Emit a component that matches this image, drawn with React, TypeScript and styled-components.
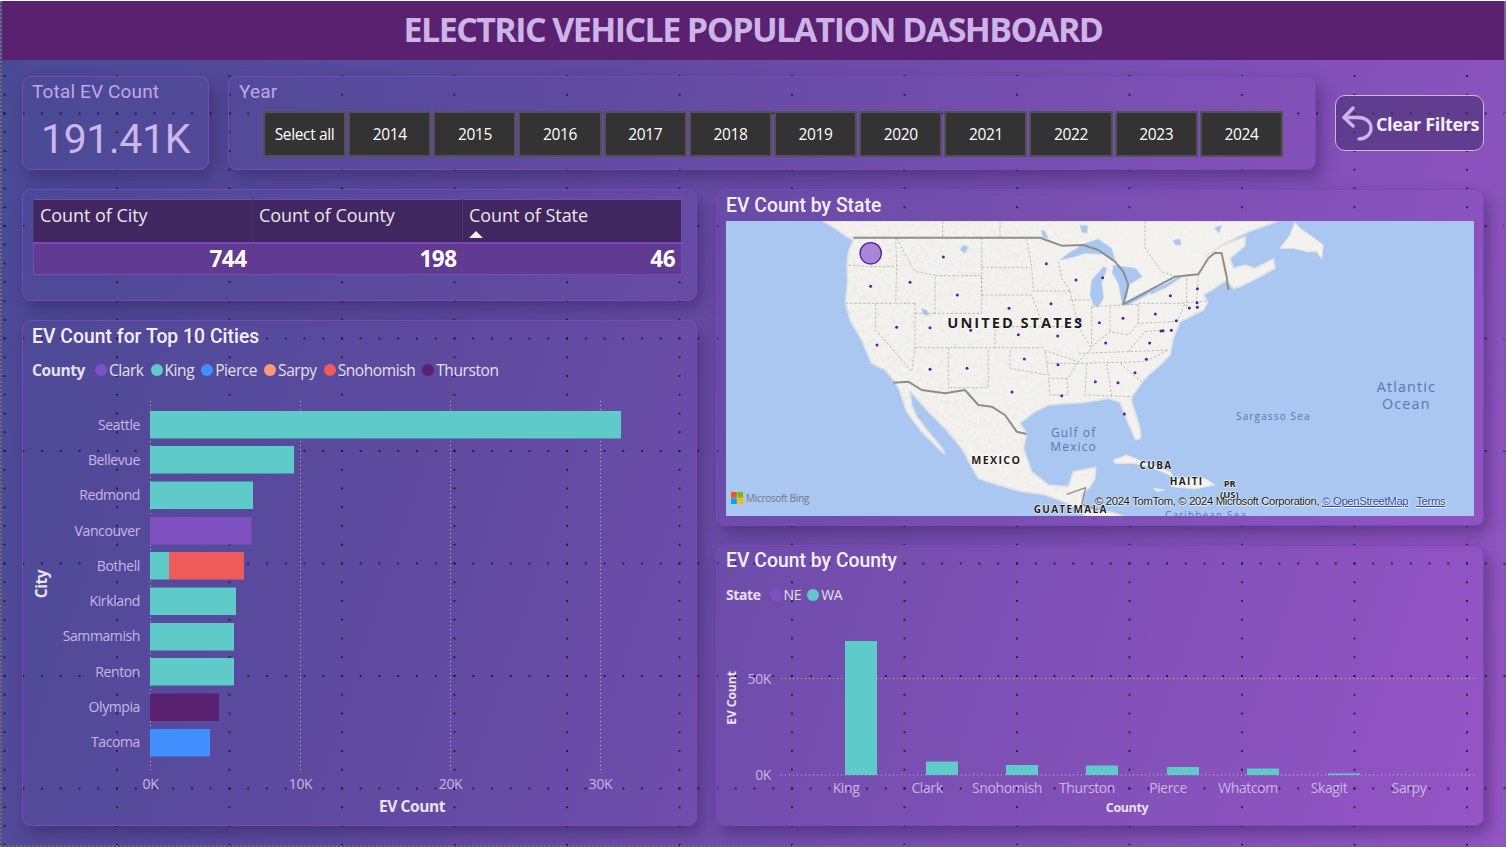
import React from "react";
import styled, { createGlobalStyle } from "styled-components";

const Global = createGlobalStyle`
  html, body { margin: 0; padding: 0; background: #fff; }
  #root { width: 1506px; height: 847px; overflow: hidden; }
`;

const sans = `Roboto, "Liberation Sans", sans-serif`;
const ui = `"Open Sans", "Liberation Sans", sans-serif`;

const Page = styled.div`
  box-sizing: border-box;
  width: 1506px;
  height: 846px;
  margin-top: 1px;
  display: flex;
  flex-direction: column;
  border: 2px dotted #6f6a78;
  border-top: 0;
  background-color: #6b50ac;
  background-image:
    radial-gradient(circle at 1px 1px, rgba(28, 18, 48, 0.8) 0.9px, transparent 1.2px),
    radial-gradient(circle at 1px 1px, rgba(28, 18, 48, 0.8) 0.9px, transparent 1.2px),
    linear-gradient(108deg, #484a94 0%, #5d4a9f 32%, #7f50b6 72%, #9655c6 100%);
  background-size: 112.5px 18.75px, 18.75px 112.5px, 100% 100%;
  background-position: 3.5px -1px, 3.5px -1px, 0 0;
  background-origin: border-box;
  font-family: ${sans};
`;

const Header = styled.header`
  height: 59px;
  flex: none;
  box-sizing: border-box;
  padding-bottom: 4px;
  display: flex;
  align-items: center;
  justify-content: center;
  background: #5a2170;
`;

const Title = styled.h1`
  margin: 0;
  font: 700 34px/1 ${ui};
  letter-spacing: -1.57px;
  color: #cdb4e6;
  white-space: nowrap;
`;

const Content = styled.main`
  flex: 1;
  display: flex;
  flex-direction: column;
  gap: 19px;
  padding: 16px 20px 0;
`;

const TopRow = styled.section`
  display: flex;
  gap: 19px;
  height: 94px;
`;

const Card = styled.div`
  box-sizing: border-box;
  border: 1px solid #7a48bb;
  border-radius: 9px;
  box-shadow: 5px 8px 16px rgba(38, 26, 72, 0.42);
`;

const KpiCard = styled(Card)`
  width: 187px;
  padding: 3px 9px 0;
`;

const CardLabel = styled.div`
  font: 400 19px/24px ${sans};
  letter-spacing: 0.15px;
  color: #c3a6e6;
`;

const KpiValue = styled.div`
  margin-top: 10px;
  text-align: center;
  font: 400 41px/50px ${sans};
  letter-spacing: -0.4px;
  color: #cdb6ea;
`;

const SlicerCard = styled(Card)`
  width: 1088px;
  padding: 3px 32px 0 10px;
`;

const YearButtons = styled.div`
  display: grid;
  grid-template-columns: repeat(12, 1fr);
  gap: 2px;
  margin: 7px 0 0 24px;
`;

const YearButton = styled.button`
  height: 46px;
  padding: 2px 0 0;
  border: 2px solid #555058;
  background: #333333;
  color: #ffffff;
  font: 400 15.5px/1 ${ui};
  letter-spacing: -0.35px;
`;

const ClearButton = styled.button`
  box-sizing: border-box;
  align-self: center;
  width: 149px;
  height: 56px;
  display: flex;
  align-items: center;
  padding: 0 0 0 6px;
  gap: 2px;
  border: 1px solid #cdb6e8;
  border-radius: 10px;
  background: rgba(72, 48, 116, 0.62);
  color: #f1ecf6;
  font: 700 18px/1 ${ui};
  letter-spacing: -0.35px;
  white-space: nowrap;
`;

const ClearLabel = styled.span`
  padding-top: 2px;
`;

const Columns = styled.section`
  display: grid;
  grid-template-columns: 675px 768px;
  gap: 19px;
`;

const Column = styled.div`
  display: flex;
  flex-direction: column;
  gap: 19px;
`;

const TableCard = styled(Card)`
  height: 112px;
  padding: 9px 14px 0 10px;
`;

const Table = styled.table`
  width: 648px;
  table-layout: fixed;
  border-collapse: collapse;
  border: 1px solid #7a48bb;
`;

const HeadCell = styled.th<{ $w: number }>`
  position: relative;
  width: ${(p) => p.$w}px;
  height: 43px;
  box-sizing: border-box;
  padding: 3px 6px 0;
  vertical-align: top;
  text-align: left;
  background: #40275f;
  border-left: 1px solid #4d3270;
  border-bottom: 2px solid #7a48bb;
  font: 400 18px/24px ${ui};
  letter-spacing: -0.05px;
  color: #ece6f3;
`;

const SortArrow = styled.span`
  position: absolute;
  left: 6px;
  bottom: 4px;
  width: 0;
  height: 0;
  border-left: 7px solid transparent;
  border-right: 7px solid transparent;
  border-bottom: 7px solid #f2ecf6;
`;

const ValueCell = styled.td`
  height: 32px;
  box-sizing: border-box;
  padding: 1px 6px 0;
  text-align: right;
  background: #613a92;
  font: 700 22.5px/1 ${ui};
  letter-spacing: -0.55px;
  color: #ffffff;
`;

const ChartCard = styled(Card)<{ $h: number; $pt: number }>`
  position: relative;
  height: ${(p) => p.$h}px;
  padding: ${(p) => p.$pt}px 9px 0;
  display: flex;
  flex-direction: column;
`;

const PanelTitle = styled.h2`
  margin: 0;
  font: 500 19.3px/24px ${sans};
  letter-spacing: 0.05px;
  color: #f4effa;
`;

const Legend = styled.div<{ $top: number; $small?: boolean }>`
  display: flex;
  align-items: center;
  margin-top: ${(p) => p.$top}px;
  height: 20px;
  gap: ${(p) => (p.$small ? 6 : 7)}px;
  font: 400 ${(p) => (p.$small ? 14 : 15.5)}px/20px ${ui};
  letter-spacing: ${(p) => (p.$small ? -0.4 : -0.42)}px;
  color: #e6e0ef;
`;

const LegendName = styled.span`
  font-weight: 700;
  margin-right: 3px;
`;

const LegendItem = styled.span<{ $c: string }>`
  display: flex;
  align-items: center;
  gap: 2px;
  &::before {
    content: "";
    width: 12px;
    height: 12px;
    border-radius: 50%;
    background: ${(p) => p.$c};
  }
`;

const ChartSvg = styled.svg`
  position: absolute;
  left: 0;
  bottom: 0;
  display: block;
  overflow: visible;
  text {
    font-family: ${ui};
  }
  .tick {
    font-size: 14px;
    letter-spacing: -0.4px;
    fill: #c9b6e6;
  }
  .axis {
    font-size: 15.5px;
    font-weight: 700;
    letter-spacing: -0.4px;
    fill: #e9e3f2;
  }
`;

const MapBox = styled.div`
  position: relative;
  width: 748px;
  height: 295px;
  margin-top: 3px;
  overflow: hidden;
  background: #a9c7f0;
`;

const MapSvg = styled.svg`
  display: block;
  width: 748px;
  height: 295px;
  text {
    font-family: "Open Sans", "Liberation Sans", sans-serif;
    text-anchor: middle;
  }
  .country {
    font-weight: 700;
    fill: #1c1c1c;
    stroke: #ffffff;
    stroke-width: 3px;
    paint-order: stroke;
  }
  .sea {
    fill: #5a78b2;
    letter-spacing: 3.4px;
  }
`;

const BingMark = styled.div`
  position: absolute;
  left: 5px;
  bottom: 12px;
  display: flex;
  align-items: center;
  gap: 3px;
  font: 400 10.2px/12px ${ui};
  letter-spacing: -0.4px;
  color: #767a86;
`;

const Attribution = styled.div`
  position: absolute;
  left: 369px;
  bottom: 8px;
  white-space: nowrap;
  font: 400 11.4px/14px "Liberation Sans", sans-serif;
  letter-spacing: -0.39px;
  color: #1a1a1a;
  text-shadow: 0 1px 1px #fff, 1px 0 1px #fff;
  a {
    color: #2f45a8;
    text-decoration: underline;
    margin-left: 3px;
  }
  a + a {
    margin-left: 8px;
  }
`;

const cities = [
  { name: "Seattle", y: 411, segs: [["#5ecbc8", 150, 621]] },
  { name: "Bellevue", y: 446, segs: [["#5ecbc8", 150, 294]] },
  { name: "Redmond", y: 481.5, segs: [["#5ecbc8", 150, 253]] },
  { name: "Vancouver", y: 517, segs: [["#7f50c0", 150, 251.5]] },
  { name: "Bothell", y: 552, segs: [["#5ecbc8", 150, 169], ["#ef5a5a", 169, 244]] },
  { name: "Kirkland", y: 587.5, segs: [["#5ecbc8", 150, 236]] },
  { name: "Sammamish", y: 623, segs: [["#5ecbc8", 150, 234]] },
  { name: "Renton", y: 658, segs: [["#5ecbc8", 150, 234]] },
  { name: "Olympia", y: 693.5, segs: [["#5a2170", 150, 219]] },
  { name: "Tacoma", y: 729, segs: [["#3f8fff", 150, 210]] },
] as { name: string; y: number; segs: [string, number, number][] }[];

const counties = [
  ["King", 845, 641, 846],
  ["Clark", 926, 761.5, 927],
  ["Snohomish", 1006, 765, 1007],
  ["Thurston", 1086, 765.5, 1087],
  ["Pierce", 1167, 767, 1168],
  ["Whatcom", 1247, 768.5, 1248],
  ["Skagit", 1328, 773.5, 1329],
  ["Sarpy", 1408, 775, 1409],
] as [string, number, number, number][];

const stateDots = [
  [685, 126], [994, 146], [1083, 195], [1163, 188], [1447, 221], [1366, 242], [467, 214], [585, 202],
  [727, 240], [1008, 266], [882, 280], [1446, 263], [1447, 277], [1423, 279], [1321, 297], [1224, 310],
  [1095, 317], [1153, 323], [1384, 317], [545, 337], [645, 338], [767, 346], [910, 359], [1028, 363],
  [1338, 348], [1344, 347], [1369, 346], [486, 390], [1172, 384], [1304, 384], [928, 432], [1029, 449],
  [1294, 433], [645, 463], [756, 460], [1260, 473], [1141, 500], [1209, 503], [891, 531], [1040, 542], [1228, 597],
];

const landPath =
  "M325 18 L360 40 L395 65 L415 75 L408 92 L400 112 L396 150 L398 200 L392 265 L405 315 L440 375 L470 445 L510 465 L540 500 L555 530 L575 590 L620 650 L665 695 L690 718 L682 700 L640 650 L605 605 L590 570 L585 528 L640 590 L690 640 L740 700 L770 755 L790 790 L850 810 L920 830 L985 838 L1050 862 L1090 880 L1180 890 L1225 903 L1225 918 L1110 918 L1105 880 L1100 840 L1125 815 L1140 790 L1142 757 L1075 770 L1060 815 L1000 810 L950 770 L925 700 L935 655 L915 625 L960 590 L1000 570 L1060 565 L1110 562 L1180 550 L1215 562 L1240 625 L1262 675 L1278 668 L1275 640 L1250 560 L1250 545 L1290 490 L1340 445 L1365 420 L1375 370 L1395 320 L1465 285 L1478 262 L1465 240 L1490 225 L1535 195 L1555 220 L1575 215 L1625 190 L1680 160 L1675 132 L1620 160 L1590 150 L1555 160 L1545 130 L1590 92 L1590 65 L1520 92 L1470 125 L1530 85 L1600 50 L1690 18 Z";

const islands = [
  "M1695 100 L1725 60 L1740 20 L1755 40 L1785 60 L1825 90 L1820 132 L1805 110 L1775 110 L1735 100 Z",
  "M1195 735 L1235 720 L1285 740 L1365 770 L1375 785 L1305 755 L1255 745 L1200 745 Z",
  "M1365 800 L1400 788 L1470 790 L1500 810 L1440 822 L1370 815 Z",
  "M1315 820 L1350 825 L1325 830 Z",
];

const lakes = [
  "M1035 135 L1060 115 L1110 85 L1150 72 L1190 100 L1200 135 L1165 118 L1110 115 L1080 125 Z",
  "M1125 240 L1130 195 L1165 155 L1176 160 L1160 200 L1166 250 L1150 275 L1135 270 Z",
  "M1195 150 L1262 160 L1282 185 L1240 210 L1236 245 L1222 268 L1210 205 L1192 175 Z",
  "M1218 268 L1240 270 L1300 238 L1302 225 L1260 245 Z",
  "M1300 232 L1350 208 L1395 182 L1400 186 L1360 214 L1310 238 Z",
  "M1095 30 L1118 32 L1116 55 L1100 52 Z",
  "M978 45 L990 48 L1000 70 L984 68 Z",
  "M620 280 L636 285 L640 302 L625 298 Z",
  "M1375 75 L1395 72 L1398 90 L1380 90 Z",
  "M1498 40 L1520 30 L1512 55 Z",
  "M745 90 L760 95 L750 115 L735 105 Z",
];

const stateLines = [
  "M400 150 L470 155 L545 155",
  "M392 265 L540 265",
  "M542 68 L545 150 L542 265 L600 265",
  "M545 70 L600 170 L660 180",
  "M660 182 L800 182 L800 295 L660 295 L660 182",
  "M800 68 L800 240",
  "M800 157 L945 157",
  "M935 70 L950 157 L955 228 L1065 228",
  "M800 240 L950 240 L985 335 L840 335 L840 398",
  "M660 295 L600 295",
  "M600 265 L600 398 L590 470",
  "M482 265 L482 345 L590 470",
  "M600 398 L985 398",
  "M700 398 L700 520",
  "M820 405 L820 518 L700 518",
  "M885 405 L885 460 L1000 480 L990 405",
  "M985 335 L1090 335 L1130 400 L1090 440 L985 405",
  "M995 445 L1085 445 L1060 490 L1000 490 L1005 540 L1060 540 L1055 490",
  "M1115 445 L1110 545",
  "M1175 445 L1190 545",
  "M1085 445 L1290 440 L1360 405",
  "M1120 540 L1245 545",
  "M1215 445 L1280 500",
  "M1090 415 L1240 410 L1360 405",
  "M1130 275 L1130 395",
  "M1185 275 L1185 350",
  "M1130 275 L1270 268",
  "M1270 265 L1410 265 L1385 320 L1270 325 L1270 265",
  "M1065 228 L1040 190 L1030 140",
  "M1065 255 L1130 255",
  "M1065 228 L1090 335",
  "M1130 395 L1185 350 L1240 360 L1270 325",
  "M1240 410 L1290 350 L1340 345",
  "M1415 190 L1415 280",
  "M1450 180 L1445 260",
  "M1415 262 L1480 258",
  "M683 18 L683 65",
  "M855 18 L855 65",
  "M1290 18 L1290 100 L1340 170 L1385 185",
];

const canadaBorder =
  "M415 68 L975 68 L985 72 L1040 92 L1105 90 L1150 105 L1200 140 L1225 170 L1240 210 L1225 268 L1300 228 L1380 185 L1450 178 L1480 130 L1500 113 L1520 115 L1535 185 L1540 225";
const mexicoBorder =
  "M535 503 L580 500 L620 525 L690 535 L750 525 L790 570 L830 575 L870 600 L905 650 L935 657";
const guatemalaBorder = "M1055 838 L1112 818 L1100 868 L1150 885";

function MapDrawing() {
  return (
    <MapSvg viewBox="33 18 2244 885" aria-label="Map of North America">
      <defs>
        <clipPath id="landClip">
          <path d={landPath} />
        </clipPath>
        <filter id="relief" x="0" y="0" width="100%" height="100%">
          <feTurbulence type="fractalNoise" baseFrequency="0.07" numOctaves="3" seed="7" />
          <feColorMatrix values="0 0 0 0 0.55  0 0 0 0 0.53  0 0 0 0 0.5  1.4 0 0 0 -0.62" />
        </filter>
        <linearGradient id="fade" x1="0" x2="1" y1="0" y2="0">
          <stop offset="0" stopColor="#fff" />
          <stop offset="0.34" stopColor="#fff" stopOpacity="0.8" />
          <stop offset="0.5" stopColor="#fff" stopOpacity="0.2" />
          <stop offset="1" stopColor="#fff" stopOpacity="0.12" />
        </linearGradient>
        <mask id="reliefMask">
          <rect x="33" y="18" width="2244" height="885" fill="url(#fade)" />
        </mask>
      </defs>
      <path d={landPath} fill="#f4f2ee" stroke="#dfe3e6" strokeWidth="5" />
      {islands.map((d) => (
        <path key={d} d={d} fill="#f4f2ee" stroke="#dfe3e6" strokeWidth="3" />
      ))}
      <g clipPath="url(#landClip)">
        <g mask="url(#reliefMask)">
          <rect x="33" y="18" width="2244" height="885" filter="url(#relief)" opacity="0.3" />
        </g>
      </g>
      {lakes.map((d) => (
        <path key={d} d={d} fill="#a9c7f0" stroke="#c8d8ec" strokeWidth="2" />
      ))}
      <g fill="none" stroke="#a8a6a0" strokeWidth="2" strokeDasharray="8 5">
        {stateLines.map((d) => (
          <path key={d} d={d} />
        ))}
      </g>
      <g fill="none" stroke="#8f8e8a" strokeWidth="6" strokeLinejoin="round">
        <path d={canadaBorder} />
        <path d={mexicoBorder} />
        <path d={guatemalaBorder} strokeWidth="4" />
      </g>
      <path d="M1225 268 L1300 228 L1380 185" fill="none" stroke="#7f9cc4" strokeWidth="3" />
      <text className="country" x="902" y="338" fontSize="44" letterSpacing="6">UNITED STATES</text>
      <text className="country" x="844" y="746" fontSize="32" letterSpacing="4">MEXICO</text>
      <text className="country" x="1323" y="761" fontSize="30" letterSpacing="4">CUBA</text>
      <text className="country" x="1415" y="810" fontSize="30" letterSpacing="4">HAITI</text>
      <text className="country" x="1544" y="816" fontSize="28">PR</text>
      <text className="country" x="1543" y="848" fontSize="28">(US)</text>
      <text className="country" x="1067" y="895" fontSize="30" letterSpacing="4">GUATEMALA</text>
      <text className="sea" x="1076" y="665" fontSize="36">Gulf of</text>
      <text className="sea" x="1076" y="708" fontSize="36">Mexico</text>
      <text className="sea" x="1675" y="616" fontSize="30">Sargasso Sea</text>
      <text className="sea" x="2074" y="532" fontSize="43">Atlantic</text>
      <text className="sea" x="2074" y="582" fontSize="43">Ocean</text>
      <text className="sea" x="1473" y="912" fontSize="30">Caribbean Sea</text>
      <circle cx="467" cy="115" r="32" fill="#a986d8" stroke="#5420a0" strokeWidth="4" />
      {stateDots.map(([x, y]) => (
        <circle key={`${x}-${y}`} cx={x} cy={y} r="4.5" fill="#5a1fa8" />
      ))}
    </MapSvg>
  );
}

function BackIcon() {
  return (
    <svg width="32" height="36" viewBox="0 0 32 36" fill="none" stroke="#cfb2ea" strokeWidth="3.4" strokeLinecap="round">
      <path d="M11 3 L2 12.5 L11 21" strokeLinejoin="round" />
      <path d="M2 12.5 H16 C24 12.5 29 17 29 23 C29 30 23 34 17 34" />
    </svg>
  );
}

function BingLogo() {
  return (
    <svg width="12" height="12" viewBox="0 0 12 12">
      <rect width="5.7" height="5.7" fill="#f25022" />
      <rect x="6.3" width="5.7" height="5.7" fill="#7fba00" />
      <rect y="6.3" width="5.7" height="5.7" fill="#00a4ef" />
      <rect x="6.3" y="6.3" width="5.7" height="5.7" fill="#ffb900" />
    </svg>
  );
}

export default function App() {
  const years = ["Select all", "2014", "2015", "2016", "2017", "2018", "2019", "2020", "2021", "2022", "2023", "2024"];
  return (
    <Page>
      <Global />
      <Header>
        <Title>ELECTRIC VEHICLE POPULATION DASHBOARD</Title>
      </Header>
      <Content>
        <TopRow>
          <KpiCard>
            <CardLabel>Total EV Count</CardLabel>
            <KpiValue>191.41K</KpiValue>
          </KpiCard>
          <SlicerCard>
            <CardLabel>Year</CardLabel>
            <YearButtons>
              {years.map((y) => (
                <YearButton key={y}>{y}</YearButton>
              ))}
            </YearButtons>
          </SlicerCard>
          <ClearButton>
            <BackIcon />
            <ClearLabel>Clear Filters</ClearLabel>
          </ClearButton>
        </TopRow>
        <Columns>
          <Column>
            <TableCard>
              <Table>
                <thead>
                  <tr>
                    <HeadCell $w={219}>Count of City</HeadCell>
                    <HeadCell $w={210}>Count of County</HeadCell>
                    <HeadCell $w={219}>
                      Count of State
                      <SortArrow />
                    </HeadCell>
                  </tr>
                </thead>
                <tbody>
                  <tr>
                    <ValueCell>744</ValueCell>
                    <ValueCell>198</ValueCell>
                    <ValueCell>46</ValueCell>
                  </tr>
                </tbody>
              </Table>
            </TableCard>
            <ChartCard $h={506} $pt={4}>
              <PanelTitle>EV Count for Top 10 Cities</PanelTitle>
              <Legend $top={11}>
                <LegendName>County</LegendName>
                <LegendItem $c="#7f50c0">Clark</LegendItem>
                <LegendItem $c="#5ecbc8">King</LegendItem>
                <LegendItem $c="#3f8fff">Pierce</LegendItem>
                <LegendItem $c="#ff9b7a">Sarpy</LegendItem>
                <LegendItem $c="#ef5a5a">Snohomish</LegendItem>
                <LegendItem $c="#5a2170">Thurston</LegendItem>
              </Legend>
              <ChartSvg width="673" height="430" viewBox="23 395 673 430">
                {[150.5, 300.5, 450.5, 600.5].map((x, i) => (
                  <g key={x}>
                    <line x1={x} x2={x} y1={401} y2={770} stroke="#fff" strokeOpacity={0.65} strokeDasharray="1 3" />
                    <text className="tick" x={x} y={789} textAnchor="middle">{`${i * 10}K`}</text>
                  </g>
                ))}
                {cities.map((c, i) => (
                  <g key={c.name}>
                    <text className="tick" x={140} y={429.6 + i * 35.3} textAnchor="end">{c.name}</text>
                    {c.segs.map(([col, a, b]) => (
                      <rect key={col} x={a} y={c.y} width={b - a} height={27.5} fill={col} />
                    ))}
                  </g>
                ))}
                <text className="axis" x={412} y={812} textAnchor="middle">EV Count</text>
                <text className="axis" transform="translate(47 584) rotate(-90)" textAnchor="middle">City</text>
              </ChartSvg>
            </ChartCard>
          </Column>
          <Column>
            <ChartCard $h={337} $pt={4}>
              <PanelTitle>EV Count by State</PanelTitle>
              <MapBox>
                <MapDrawing />
                <BingMark>
                  <BingLogo />
                  Microsoft Bing
                </BingMark>
                <Attribution>
                  © 2024 TomTom, © 2024 Microsoft Corporation,
                  <a>© OpenStreetMap</a>
                  <a>Terms</a>
                </Attribution>
              </MapBox>
            </ChartCard>
            <ChartCard $h={281} $pt={3}>
              <PanelTitle>EV Count by County</PanelTitle>
              <Legend $top={12} $small>
                <LegendName>State</LegendName>
                <LegendItem $c="#7f50c0">NE</LegendItem>
                <LegendItem $c="#5ecbc8">WA</LegendItem>
              </Legend>
              <ChartSvg width="766" height="215" viewBox="717 610 766 215">
                {[
                  [678.5, "50K"],
                  [775, "0K"],
                ].map(([y, label]) => (
                  <g key={label}>
                    <line x1={781} x2={1474} y1={y} y2={y} stroke="#fff" strokeOpacity={0.6} strokeDasharray="1 3" />
                    <text className="tick" x={771} y={Number(y) + 5} textAnchor="end">{label}</text>
                  </g>
                ))}
                {counties.map(([name, x, top, cx]) => (
                  <g key={name}>
                    <rect x={x} y={top} width={32} height={775 - top} fill="#5ecbc8" />
                    <text className="tick" x={cx} y={793} textAnchor="middle">{name}</text>
                  </g>
                ))}
                <text className="axis" style={{ fontSize: 12.5 }} x={1127} y={812} textAnchor="middle">County</text>
                <text
                  fontWeight={700}
                  fontSize={12}
                  fill="#e9e3f2"
                  transform="translate(736 698) rotate(-90)"
                  textAnchor="middle"
                >
                  EV Count
                </text>
              </ChartSvg>
            </ChartCard>
          </Column>
        </Columns>
      </Content>
    </Page>
  );
}
